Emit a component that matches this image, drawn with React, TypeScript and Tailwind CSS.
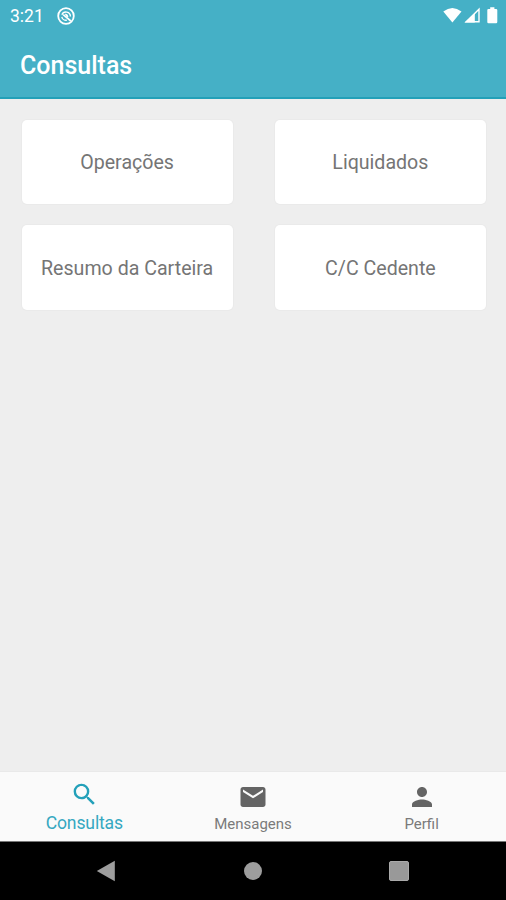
import type { ReactNode } from "react";

interface TabItemProps {
  label: string;
  path: string;
  active?: boolean;
}

const SEARCH =
  "M15.5 14h-.79l-.28-.27A6.471 6.471 0 0 0 16 9.5 6.5 6.5 0 1 0 9.5 16c1.61 0 3.09-.59 4.23-1.57l.27.28v.79l5 4.99L20.49 19l-4.99-5zm-6 0C7.01 14 5 11.99 5 9.5S7.01 5 9.5 5 14 7.01 14 9.5 11.99 14 9.5 14z";
const MAIL =
  "M20 4H4c-1.1 0-1.99.9-1.99 2L2 18c0 1.1.9 2 2 2h16c1.1 0 2-.9 2-2V6c0-1.1-.9-2-2-2zm0 4l-8 5-8-5V6l8 5 8-5v2z";
const PERSON =
  "M12 12c2.21 0 4-1.79 4-4s-1.79-4-4-4-4 1.79-4 4 1.79 4 4 4zm0 2c-2.67 0-8 1.34-8 4v2h16v-2c0-2.66-5.33-4-8-4z";

function StatusBar() {
  return (
    <div className="flex h-8 items-center justify-between pl-[10px] pr-[8px] text-white">
      <div className="flex items-center gap-[13px] pt-px">
        <span className="text-[17.5px] leading-none">3:21</span>
        <svg width="18" height="18" viewBox="0 0 18 18" fill="none" className="-mt-[2px]">
          <circle cx="9" cy="9" r="7.8" stroke="#fff" strokeWidth="1.8" />
          <path
            d="M4.9 7.8A4.4 4.4 0 0 1 13.4 9.4M4.8 9.8A4.3 4.3 0 0 0 9.8 13.2"
            stroke="#fff"
            strokeWidth="1.4"
          />
          <path d="M6.2 7.6L13.8 14" stroke="#fff" strokeWidth="1.7" />
          <path d="M7.6 6.8q3.2-.6 3.8 3.2l-1.4.2z" fill="#fff" />
        </svg>
      </div>
      <svg width="56" height="20" viewBox="0 0 56 20" fill="none">
        <path d="M1.3 5.6Q10.4-1.4 19.5 5.6L10.4 16.6z" fill="#fff" />
        <path d="M37 3.2v12.6H24.2z" stroke="#fff" strokeWidth="1.4" />
        <path d="M32.8 7v9.5H22.6z" fill="#fff" />
        <path
          d="M48.2 1.2h4.2v1.7h1.7q1.2 0 1.2 1.2v11.9q0 1.2-1.2 1.2h-7.6q-1.2 0-1.2-1.2V4.1q0-1.2 1.2-1.2h1.7z"
          fill="#fff"
        />
      </svg>
    </div>
  );
}

function MenuCard({ children }: { children: ReactNode }) {
  return (
    <button className="flex items-center justify-center rounded-[5px] bg-white pt-[2px] text-[19.6px] text-[#757575] shadow-[0_0_1px_1px_rgba(0,0,0,0.02)]">
      {children}
    </button>
  );
}

function TabItem({ label, path, active }: TabItemProps) {
  return (
    <button
      className={
        active
          ? "flex flex-col items-center pt-[8px] text-[#35a8c1]"
          : "flex flex-col items-center pt-[10px] text-[#7a7a7a]"
      }
    >
      <svg
        viewBox="0 0 24 24"
        className={
          active
            ? "h-[29px] w-[29px] fill-[#23a0b9]"
            : "h-[30px] w-[30px] fill-[#646464]"
        }
      >
        <path d={path} />
      </svg>
      <span
        className={
          active
            ? "mt-[4px] text-[17.6px] leading-[20px] tracking-[-0.15px]"
            : "mt-[3px] text-[15px] leading-[18px]"
        }
      >
        {label}
      </span>
    </button>
  );
}

function SystemNav() {
  return (
    <div className="flex h-[58px] items-center justify-between bg-black px-[96px]">
      <svg width="20" height="22" viewBox="0 0 20 22">
        <path d="M18.8.8v20.4L.8 11z" fill="#9d9d9d" />
      </svg>
      <div className="ml-px h-[18px] w-[18px] rounded-full bg-[#9d9d9d]" />
      <div className="mr-px h-[20px] w-[20px] rounded-[2px] border border-[#aaaaaa] bg-[#999999]" />
    </div>
  );
}

export default function App() {
  return (
    <div className="flex h-[900px] w-[506px] flex-col overflow-hidden bg-[#eeeeee] font-['Roboto',sans-serif]">
      <header className="h-[99px] border-b-2 border-[#23a0b8] bg-[#45b0c6]">
        <StatusBar />
        <h1 className="pl-[20px] pt-[17px] text-[25px] font-medium leading-[34px] text-white">
          Consultas
        </h1>
      </header>
      <main className="grid flex-1 grid-cols-2 grid-rows-[84px_85px] content-start gap-x-[42px] gap-y-[21px] pl-[21.5px] pr-[20px] pt-[21px]">
        <MenuCard>Operações</MenuCard>
        <MenuCard>Liquidados</MenuCard>
        <MenuCard>Resumo da Carteira</MenuCard>
        <MenuCard>C/C Cedente</MenuCard>
      </main>
      <nav className="grid h-[70px] grid-cols-3 border-b border-[#777777] bg-[#fafafa] shadow-[0_0_1px_rgba(0,0,0,0.12)]">
        <TabItem label="Consultas" path={SEARCH} active />
        <TabItem label="Mensagens" path={MAIL} />
        <TabItem label="Perfil" path={PERSON} />
      </nav>
      <SystemNav />
    </div>
  );
}
